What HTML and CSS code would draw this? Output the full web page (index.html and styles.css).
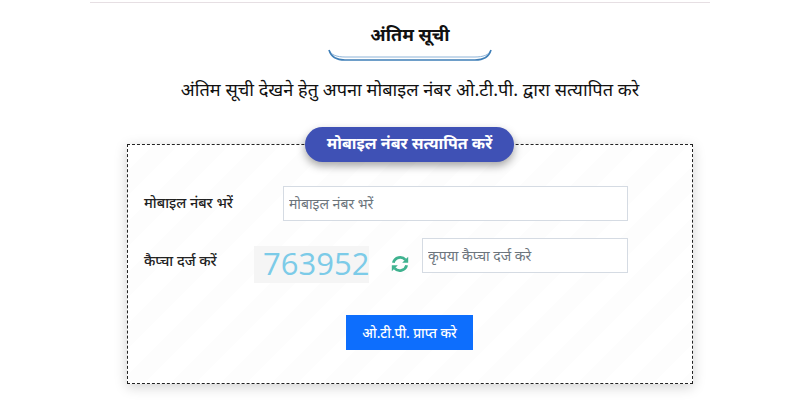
FILE: index.html
```html
<!DOCTYPE html>
<html lang="hi">
  <head>
    <meta charset="UTF-8" />
    <title>अंतिम सूची</title>
    <link rel="stylesheet" href="styles.css">
  </head>
  <body>
    <div class="container">
      <div class="heading">
        <h1>अंतिम सूची</h1>
        <svg class="swoosh" width="164" height="14" viewBox="0 0 164 14">
          <path d="M1 1 C3 6 9 8 17 8 H147 C155 8 161 6 163 1" fill="#fff" stroke="#8fb4d8" stroke-width="1"/>
          <path d="M1 1 C3 8 9 11 17 11 H147 C155 11 161 8 163 1" fill="none" stroke="#3f7fb8" stroke-width="1.5"/>
        </svg>
      </div>
      <p class="subtitle">अंतिम सूची देखने हेतु अपना मोबाइल नंबर ओ.टी.पी. द्वारा सत्यापित करे</p>

      <div class="verify-box">
        <div class="pill">मोबाइल नंबर सत्यापित करें</div>
        <div class="row row-mobile">
          <label class="label">मोबाइल नंबर भरें</label>
          <input class="field field-mobile" type="text" placeholder="मोबाइल नंबर भरें" />
        </div>
        <div class="row row-captcha">
          <label class="label label-captcha">कैप्चा दर्ज करें</label>
          <div class="captcha">763952</div>
          <svg class="refresh" width="20" height="20" viewBox="0 0 24 24">
            <path d="M4 10.5 A8.5 8.5 0 0 1 18.6 7" fill="none" stroke="#3fb28f" stroke-width="3.4"/>
            <path d="M21.8 3.2 V10.4 H14.6 Z" fill="#3fb28f"/>
            <path d="M20 13.5 A8.5 8.5 0 0 1 5.4 17" fill="none" stroke="#3fb28f" stroke-width="3.4"/>
            <path d="M2.2 20.8 V13.6 H9.4 Z" fill="#3fb28f"/>
          </svg>
          <input class="field field-captcha" type="text" placeholder="कृपया कैप्चा दर्ज करे" />
        </div>
        <div class="actions">
          <button class="btn">ओ.टी.पी. प्राप्त करे</button>
        </div>
      </div>
    </div>
  </body>
</html>
```

FILE: styles.css
```css
* {
  margin: 0;
  padding: 0;
  box-sizing: border-box;
}
body {
  font-family: "Noto Sans", "Liberation Sans", sans-serif;
  background: #fff;
  color: #111;
  width: 800px;
  height: 400px;
  overflow: hidden;
}
.container {
  width: 620px;
  margin: 2px auto 0;
  border-top: 1px solid #e6dfe3;
  padding: 0 0 0 37px;
}
.heading {
  width: 566px;
  height: 58px;
  padding-top: 19px;
  text-align: center;
}
.heading h1 {
  font-size: 18px;
  font-weight: 700;
  line-height: 24px;
  color: #111;
}
.swoosh {
  display: block;
  margin: 3px auto 0;
}
.subtitle {
  width: 566px;
  margin-top: 13px;
  text-align: center;
  font-size: 18.2px;
  line-height: 30px;
  color: #111;
}
.verify-box {
  position: relative;
  width: 566px;
  height: 240px;
  margin-top: 40px;
  border: 1px dashed #222;
  padding: 41px 16px 0;
  background: repeating-linear-gradient(135deg, #fff 0, #fff 18px, #fdfdfd 18px, #fdfdfd 36px);
  box-shadow: 0 3px 12px rgba(0, 0, 0, 0.18);
}
.pill {
  position: absolute;
  top: -18px;
  left: 177px;
  width: 209px;
  height: 35px;
  border-radius: 18px;
  background: #3f51b5;
  color: #fff;
  font-size: 16px;
  font-weight: 700;
  line-height: 32px;
  text-align: center;
  box-shadow: 0 4px 8px rgba(0, 0, 0, 0.35);
}
.row {
  display: flex;
}
.label {
  font-size: 14.4px;
  font-weight: 500;
  color: #222;
}
.row-mobile {
  align-items: center;
  height: 35px;
}
.row-mobile .label {
  width: 139px;
  padding-bottom: 2px;
}
.field {
  height: 35px;
  border: 1px solid #d5dbe3;
  background: #fff;
  padding: 0 5px;
  font-family: inherit;
  font-size: 14px;
  color: #333;
}
.field::placeholder {
  color: #6c757d;
}
.field-mobile {
  width: 345px;
}
.row-captcha {
  height: 45px;
  margin-top: 17px;
}
.label-captcha {
  width: 110px;
  margin-top: 13px;
}
.captcha {
  width: 115px;
  height: 37px;
  margin-top: 8px;
  padding-left: 9px;
  background: #f5f5f5;
  color: #7ccbe8;
  font-family: "Open Sans", sans-serif;
  font-size: 31px;
  line-height: 35px;
}
.refresh {
  margin: 16px 12px 0 21px;
}
.field-captcha {
  width: 206px;
}
.actions {
  display: flex;
  justify-content: center;
  margin-top: 32px;
  padding-right: 1px;
}
.btn {
  width: 127px;
  height: 35px;
  border: none;
  background: #0d6efd;
  color: #fff;
  font-family: inherit;
  font-size: 13.5px;
  font-weight: 500;
}
```
